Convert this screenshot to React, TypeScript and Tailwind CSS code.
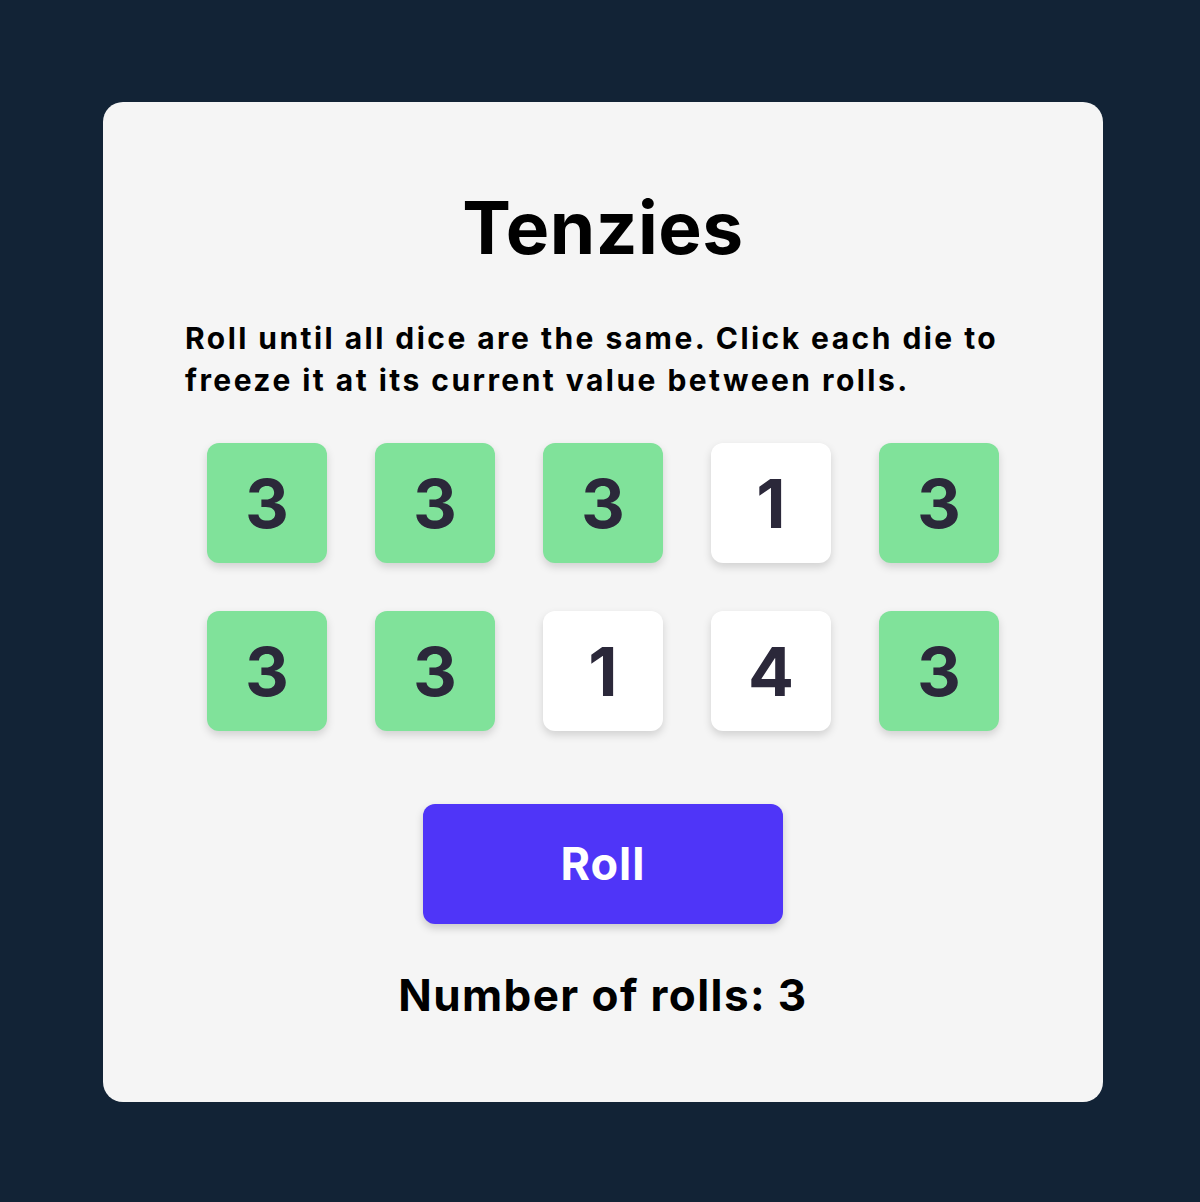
import React, { useState } from "react";

interface Die {
  id: number;
  value: number;
  isHeld: boolean;
}

const initialDice: Die[] = [
  { id: 1, value: 3, isHeld: true },
  { id: 2, value: 3, isHeld: true },
  { id: 3, value: 3, isHeld: true },
  { id: 4, value: 1, isHeld: false },
  { id: 5, value: 3, isHeld: true },
  { id: 6, value: 3, isHeld: true },
  { id: 7, value: 3, isHeld: true },
  { id: 8, value: 1, isHeld: false },
  { id: 9, value: 4, isHeld: false },
  { id: 10, value: 3, isHeld: true },
];

export default function App() {
  const [dice, setDice] = useState<Die[]>(initialDice);
  const [rolls, setRolls] = useState(3);

  const holdDie = (id: number) => {
    setDice((prev) =>
      prev.map((d) => (d.id === id ? { ...d, isHeld: !d.isHeld } : d))
    );
  };

  const rollDice = () => {
    setDice((prev) =>
      prev.map((d) =>
        d.isHeld ? d : { ...d, value: Math.ceil(Math.random() * 6) }
      )
    );
    setRolls((r) => r + 1);
  };

  return (
    <div
      className="min-h-[1202px] bg-[#122336] pl-[103px] pt-[102px]"
      style={{ fontFamily: "Inter, 'Noto Sans', sans-serif" }}
    >
      <main className="w-[1000px] h-[1000px] bg-[#f5f5f5] rounded-[20px] flex flex-col items-center">
        {/* Title */}
        <h1 className="mt-[89px] shrink-0 text-[73px] leading-none font-bold text-black tracking-[0.5px]">
          Tenzies
        </h1>

        {/* Instructions */}
        <p className="mt-[53px] shrink-0 w-[838px] pl-[1px] text-[30px] leading-[42px] font-bold text-black tracking-[2.45px]">
          Roll until all dice are the same. Click each die to freeze it at its
          current value between rolls.
        </p>

        {/* Dice grid */}
        <div className="mt-[42px] shrink-0 grid grid-cols-5 gap-[48px]">
          {dice.map((die) => (
            <button
              key={die.id}
              onClick={() => holdDie(die.id)}
              className={`w-[120px] h-[120px] rounded-[12px] flex items-center justify-center shadow-[0_4px_8px_rgba(0,0,0,0.15)] text-[68px] font-bold text-[#2b283a] cursor-pointer ${
                die.isHeld ? "bg-[#80e29a]" : "bg-white"
              }`}
            >
              {die.value}
            </button>
          ))}
        </div>

        {/* Roll button */}
        <button
          onClick={rollDice}
          className="mt-[73px] shrink-0 w-[360px] h-[120px] rounded-[12px] bg-[#4f35f8] text-white text-[45px] font-bold tracking-[1px] shadow-[0_4px_8px_rgba(0,0,0,0.18)] cursor-pointer"
        >
          Roll
        </button>

        {/* Roll counter */}
        <p className="mt-[49px] shrink-0 text-[44px] font-bold text-black leading-none tracking-[1.4px]">
          Number of rolls: {rolls}
        </p>
      </main>
    </div>
  );
}
